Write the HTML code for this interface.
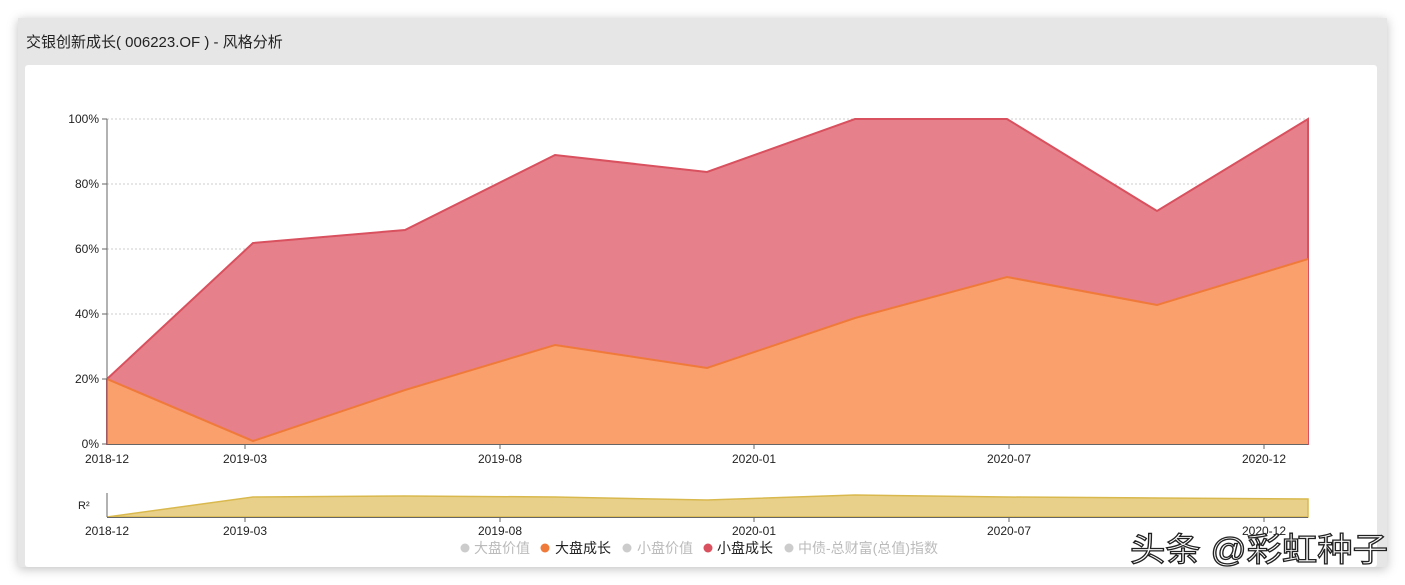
<!DOCTYPE html>
<html><head><meta charset="utf-8"><style>
body{margin:0;width:1405px;height:585px;background:#fff;position:relative;overflow:hidden;font-family:"Liberation Sans","Noto Sans CJK SC",sans-serif;}
.card{position:absolute;left:18px;top:18px;width:1369px;height:549px;background:#e6e6e6;box-shadow:0 2px 10px rgba(0,0,0,.25);}
.title{position:absolute;left:8px;top:13px;font-size:15px;color:#222;}
.panel{position:absolute;left:7px;top:47px;width:1352px;height:502px;background:#fff;border-radius:3px;}
svg{position:absolute;left:0;top:0}
</style></head><body>
<div class="card"><div class="title">交银创新成长( 006223.OF ) - 风格分析</div><div class="panel"></div></div>
<svg width="1405" height="585" font-family="Liberation Sans, Noto Sans CJK SC, sans-serif" font-size="12">
<g stroke="#ccc" stroke-dasharray="2,2">
<line x1="107" x2="1308" y1="119" y2="119"/><line x1="107" x2="1308" y1="184" y2="184"/><line x1="107" x2="1308" y1="249" y2="249"/><line x1="107" x2="1308" y1="314" y2="314"/><line x1="107" x2="1308" y1="379" y2="379"/>
</g>
<polygon fill="#e6808a" stroke="#d9505e" stroke-width="2" points="107,379 253,243 405,230 555,155 707,172 855,119 1007,119 1157,211 1308,119 1308,444 107,444"/>
<polygon fill="#f9a06c" points="107,379 253,441 405,390 555,345 707,368 855,318 1007,277 1157,305 1308,259 1308,444 107,444"/>
<polyline fill="none" stroke="#f07a3a" stroke-width="2" points="107,379 253,441 405,390 555,345 707,368 855,318 1007,277 1157,305 1308,259"/>
<g stroke="#666"><line x1="107" x2="107" y1="119" y2="444"/><line x1="107" x2="1308" y1="444.5" y2="444.5"/>
<line x1="102" x2="107" y1="119" y2="119"/><line x1="102" x2="107" y1="184" y2="184"/><line x1="102" x2="107" y1="249" y2="249"/><line x1="102" x2="107" y1="314" y2="314"/><line x1="102" x2="107" y1="379" y2="379"/><line x1="102" x2="107" y1="444" y2="444"/>
<line x1="245" x2="245" y1="444" y2="449"/><line x1="500" x2="500" y1="444" y2="449"/><line x1="754" x2="754" y1="444" y2="449"/><line x1="1009" x2="1009" y1="444" y2="449"/><line x1="1264" x2="1264" y1="444" y2="449"/></g>
<g fill="#222" text-anchor="end"><text x="99" y="123">100%</text><text x="99" y="188">80%</text><text x="99" y="253">60%</text><text x="99" y="318">40%</text><text x="99" y="383">20%</text><text x="99" y="448">0%</text></g>
<g fill="#222" text-anchor="middle"><text x="107" y="463">2018-12</text><text x="245" y="463">2019-03</text><text x="500" y="463">2019-08</text><text x="754" y="463">2020-01</text><text x="1009" y="463">2020-07</text><text x="1264" y="463">2020-12</text>
<text x="107" y="535">2018-12</text><text x="245" y="535">2019-03</text><text x="500" y="535">2019-08</text><text x="754" y="535">2020-01</text><text x="1009" y="535">2020-07</text><text x="1264" y="535">2020-12</text></g>
<polygon fill="#e8d08a" stroke="#d9b94e" stroke-width="1.5" points="107,517 253,497 405,496 555,497 707,500 855,495 1007,497 1157,498 1308,499 1308,517"/>
<g stroke="#666"><line x1="107" x2="107" y1="493" y2="517"/><line x1="107" x2="1308" y1="517.5" y2="517.5"/>
<line x1="245" x2="245" y1="517" y2="522"/><line x1="500" x2="500" y1="517" y2="522"/><line x1="754" x2="754" y1="517" y2="522"/><line x1="1009" x2="1009" y1="517" y2="522"/><line x1="1264" x2="1264" y1="517" y2="522"/></g>
<text x="78" y="509" fill="#222" font-size="11">R²</text>
<g font-size="14">
<circle cx="465" cy="548" r="4.5" fill="#ccc"/><text x="474" y="553" fill="#bbb">大盘价值</text>
<circle cx="545" cy="548" r="4.5" fill="#f07a3a"/><text x="555" y="553" fill="#222">大盘成长</text>
<circle cx="627" cy="548" r="4.5" fill="#ccc"/><text x="637" y="553" fill="#bbb">小盘价值</text>
<circle cx="708" cy="548" r="4.5" fill="#d9505e"/><text x="717" y="553" fill="#222">小盘成长</text>
<circle cx="789" cy="548" r="4.5" fill="#ccc"/><text x="798" y="553" fill="#bbb">中债-总财富(总值)指数</text>
</g>
<text x="1130" y="561" font-size="33" fill="#fff" stroke="#222" stroke-width="1.3" textLength="258" lengthAdjust="spacingAndGlyphs">头条 @彩虹种子</text>
</svg>
</body></html>
